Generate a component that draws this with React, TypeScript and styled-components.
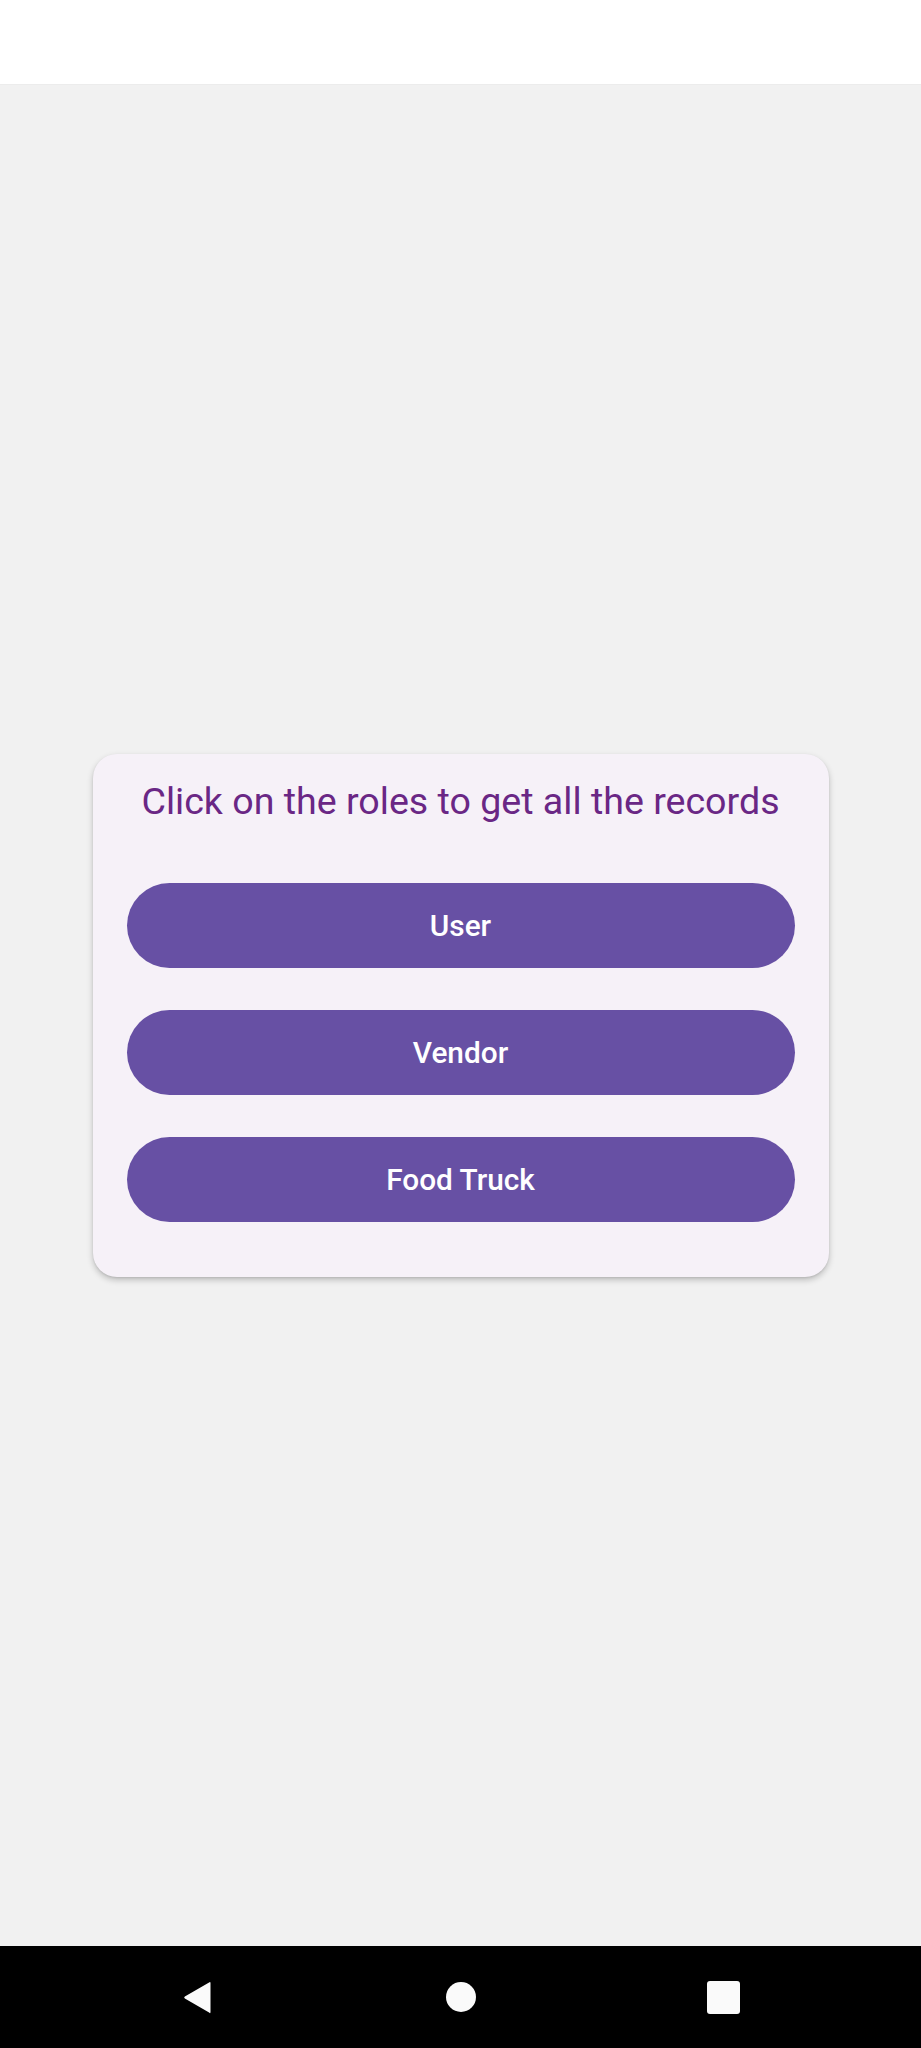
import React from "react";
import styled, { createGlobalStyle } from "styled-components";

const GlobalStyle = createGlobalStyle`
  html, body {
    margin: 0;
    padding: 0;
    background: #f1f1f1;
    font-family: Roboto, "Noto Sans", "Liberation Sans", sans-serif;
  }
  * { box-sizing: border-box; }
`;

const Screen = styled.div`
  width: 921px;
  height: 2048px;
  display: flex;
  flex-direction: column;
  background: #f1f1f1;
`;

const StatusBar = styled.div`
  height: 85px;
  flex: none;
  background: #ffffff;
  border-bottom: 1px solid #ececec;
`;

const Content = styled.main`
  flex: 1;
  display: flex;
  align-items: center;
  justify-content: center;
`;

const Card = styled.section`
  width: 736px;
  background: #f6f1f8;
  border-radius: 24px;
  box-shadow: 0 3px 6px rgba(0, 0, 0, 0.22), 0 1px 2px rgba(0, 0, 0, 0.08);
  padding: 25px 34px 55px;
  display: flex;
  flex-direction: column;
`;

const Title = styled.h1`
  margin: 0 0 59px;
  font-size: 37.6px;
  line-height: 1.2;
  font-weight: 400;
  color: #6a2785;
  text-align: center;
  white-space: nowrap;
`;

const ButtonList = styled.div`
  display: flex;
  flex-direction: column;
  gap: 42px;
`;

const RoleButton = styled.button`
  height: 85px;
  width: 100%;
  border: none;
  border-radius: 43px;
  background: #6750a4;
  color: #ffffff;
  font-family: Roboto, "Noto Sans", "Liberation Sans", sans-serif;
  font-size: 29.8px;
  font-weight: 500;
  cursor: pointer;
`;

const NavBar = styled.nav`
  height: 102px;
  flex: none;
  background: #000000;
  display: flex;
  align-items: center;
  justify-content: center;
  gap: 230px;
`;

const NavSlot = styled.div`
  width: 33px;
  height: 33px;
  display: flex;
  align-items: center;
  justify-content: center;
`;

const HomeDot = styled.div`
  width: 30px;
  height: 30px;
  border-radius: 50%;
  background: #fafafa;
`;

const RecentsSquare = styled.div`
  width: 33px;
  height: 33px;
  border-radius: 3px;
  background: #fafafa;
`;

const roles = ["User", "Vendor", "Food Truck"];

export default function App() {
  return (
    <>
      <GlobalStyle />
      <Screen>
        <StatusBar />
        <Content>
          <Card>
            <Title>Click on the roles to get all the records</Title>
            <ButtonList>
              {roles.map((r) => (
                <RoleButton key={r}>{r}</RoleButton>
              ))}
            </ButtonList>
          </Card>
        </Content>
        <NavBar>
          <NavSlot>
            <svg width="33" height="33" viewBox="0 0 33 33">
              <path
                d="M30 2 L30 31 Q30 33 28.5 31.5 L3 17.5 Q1.5 16.5 3 15.5 L28.5 1.5 Q30 0.5 30 2 Z"
                fill="#fafafa"
                transform="translate(1 0) scale(0.95 1)"
              />
            </svg>
          </NavSlot>
          <NavSlot>
            <HomeDot />
          </NavSlot>
          <NavSlot>
            <RecentsSquare />
          </NavSlot>
        </NavBar>
      </Screen>
    </>
  );
}
